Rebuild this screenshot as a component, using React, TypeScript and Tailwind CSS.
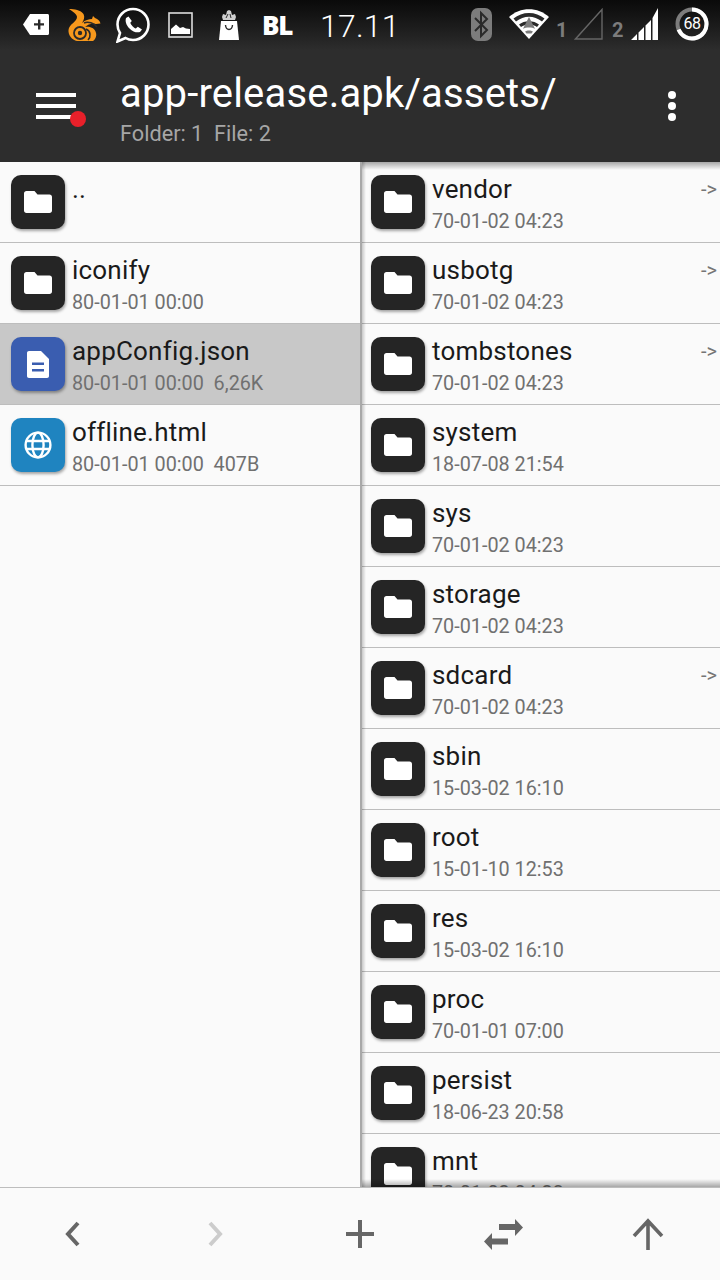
const Folder = () => (
  <svg width="28" height="22" viewBox="0 0 28 22">
    <path d="M2.5 0H10.5L13.5 3.500H25.5C27 3.500 28 4.500 28 6V19.500C28 21 27 22 25.5 22H2.500C1 22 0 21 0 19.500V2.500C0 1 1 0 2.500 0Z" fill="#fff" />
  </svg>
);
const Doc = () => (
  <svg width="22" height="27" viewBox="0 0 22 27">
    <path d="M2 0H14L22 8V25C22 26.200 21.200 27 20 27H2C.8 27 0 26.200 0 25V2C0 .8.800 0 2 0Z" fill="#fff" />
    <path d="M5 11.500H17V14H5ZM5 18H17V20.500H5Z" fill="#3a5db0" />
  </svg>
);
const Globe = () => (
  <svg width="28" height="28" viewBox="0 0 28 28" fill="none" stroke="#fff" strokeWidth="2.4">
    <circle cx="14" cy="14" r="12.4" />
    <ellipse cx="14" cy="14" rx="5.6" ry="12.4" />
    <path d="M2 10H26M2 18H26" />
  </svg>
);

type Row = { name: string; sub: string; kind?: "doc" | "web"; link?: boolean; sel?: boolean };

const left: Row[] = [
  { name: "..", sub: "" },
  { name: "iconify", sub: "80-01-01 00:00" },
  { name: "appConfig.json", sub: "80-01-01 00:00  6,26K", kind: "doc", sel: true },
  { name: "offline.html", sub: "80-01-01 00:00  407B", kind: "web" },
];
const right: Row[] = [
  { name: "vendor", sub: "70-01-02 04:23", link: true },
  { name: "usbotg", sub: "70-01-02 04:23", link: true },
  { name: "tombstones", sub: "70-01-02 04:23", link: true },
  { name: "system", sub: "18-07-08 21:54" },
  { name: "sys", sub: "70-01-02 04:23" },
  { name: "storage", sub: "70-01-02 04:23" },
  { name: "sdcard", sub: "70-01-02 04:23", link: true },
  { name: "sbin", sub: "15-03-02 16:10" },
  { name: "root", sub: "15-01-10 12:53" },
  { name: "res", sub: "15-03-02 16:10" },
  { name: "proc", sub: "70-01-01 07:00" },
  { name: "persist", sub: "18-06-23 20:58" },
  { name: "mnt", sub: "70-01-02 04:23" },
];

function FileRow({ r }: { r: Row }) {
  return (
    <div className={`relative flex h-[81px] shrink-0 items-start border-b border-[#bdbdbd] pl-[11px] pt-[13px] ${r.sel ? "bg-[#c8c8c8]" : ""}`}>
      <div
        className={`flex h-[54px] w-[54px] shrink-0 items-center justify-center rounded-[10px] shadow-[1px_2px_3px_rgba(0,0,0,0.35)] ${
          r.kind === "doc" ? "bg-[#3a5db0]" : r.kind === "web" ? "bg-[#1f84c0]" : "bg-[#252525]"
        }`}
      >
        {r.kind === "doc" ? <Doc /> : r.kind === "web" ? <Globe /> : <Folder />}
      </div>
      <div className="ml-[7px] flex flex-col">
        <div className="mt-[-1px] h-[31px] text-[26px] leading-[31px] tracking-[0.2px] text-[#1a1a1a]">{r.name}</div>
        <div className="mt-[1px] whitespace-pre text-[19.800px] leading-[31px] text-[#707070]">{r.sub}</div>
      </div>
      {r.link && <div className="absolute right-[3px] top-[16px] text-[20px] leading-[22px] text-[#757575]">-&gt;</div>}
    </div>
  );
}

function StatusBar() {
  return (
    <div className="relative flex h-[50px] items-start bg-gradient-to-b from-[#0a0a0a] to-[#2d2d2d]">
      <svg className="ml-[23px] mt-[14px]" width="26" height="21" viewBox="0 0 26 21">
        <path d="M7 0H24.500C25.400 0 26 .6 26 1.500V19.500C26 20.400 25.400 21 24.500 21H7L0 10.500Z" fill="#fff" />
        <path d="M11 9.200H15V5.500H17.400V9.200H21V11.600H17.400V15.500H15V11.600H11Z" fill="#2a2a2a" />
      </svg>
      <svg className="ml-[19px] mt-[9px]" width="33" height="32" viewBox="0 0 33 32" fill="#f7981c">
        <path d="M1 0C6 0 13 1 15.500 5C17 8 16 11 14 14C17 11 21 10 24 10L25 7L27 9C30 10 32 12 32.500 14.500L28 15C24 14 20 15 17 18C22 17 27 19 28 24C29 27 27 31 25 32H9C4 31 0 26 .5 21C1 15 9 13 9 8C9 5 5 3 1 0Z" />
        <circle cx="12" cy="24" r="6" fill="none" stroke="#2a2a2a" strokeWidth="1.8" />
        <circle cx="12" cy="24" r="2.200" fill="#2a2a2a" />
        <path d="M20 31C23 28 23 22 18 20M16 14C20 12 26 14 29 18" fill="none" stroke="#2a2a2a" strokeWidth="1.6" />
      </svg>
      <svg className="ml-[15px] mt-[7px]" width="34" height="36" viewBox="0 0 34 36" fill="none">
        <path d="M1.500 34.500L4 26C2.400 23.500 1.500 20.600 1.500 17.500C1.500 8.900 8.400 2 17 2S32.500 8.900 32.500 17.500 25.600 33 17 33C14.200 33 11.700 32.300 9.500 31Z" stroke="#fff" strokeWidth="2.6" />
        <path d="M12.500 9.500L10 11C9 14 10 18 13.500 21.500S21 26 24 25L26 22.500L21.800 19.800L19.800 21.500C18 21 14.800 17.800 14.300 15.800L15.800 14Z" fill="#fff" />
      </svg>
      <svg className="ml-[18px] mt-[12px]" width="25" height="26" viewBox="0 0 25 26" fill="none">
        <rect x="1" y="1" width="23" height="24" stroke="#ddd" strokeWidth="1.6" />
        <path d="M3 22V17L8 12.500L12 16L15 15L18 16.500L22 17V22Z" fill="#fff" />
      </svg>
      <svg className="ml-[26px] mt-[10px]" width="20" height="30" viewBox="0 0 20 30" fill="#fff">
        <path d="M2 11H18L20 30H0Z" />
        <path d="M3 7L4 4L7 5L8 1L10 0L12 1L13 5L16 4L17 7L16 10H4Z" fill="#d0d0d0" />
        <path d="M7 8L9 4M12 8L11 4" stroke="#2a2a2a" strokeWidth="1" />
        <path d="M6.500 15C7 21 13 21 13.500 15" fill="none" stroke="#2a2a2a" strokeWidth="1.4" />
      </svg>
      <div className="ml-[23px] mt-[12px] w-[30px] font-['Open_Sans'] text-[26px] font-extrabold leading-[27px] tracking-[-1.200px] text-white">BL</div>
      <div className="ml-[28px] mt-[7px] w-[80px] font-['Roboto'] text-[32px] font-light leading-[38px] tracking-[0.2px] text-white">17.11</div>
      <svg className="ml-[71px] mt-[8px]" width="21" height="33" viewBox="0 0 21 33" fill="none">
        <rect width="21" height="33" rx="7" fill="#7c7c7c" />
        <path d="M4 10L16 22L10 28V5L16 11L4 23" stroke="#2a2a2a" strokeWidth="2" />
      </svg>
      <svg className="ml-[17px] mt-[9px]" width="40" height="30" viewBox="0 0 40 30">
        <path d="M0 8C11 -2.500 29 -2.500 40 8L20 30Z" fill="#fff" />
        <path d="M4.500 9.500C13 2 27 2 35.500 9.500L33 12.500C25 6 15 6 7 12.500Z" fill="#2a2a2a" />
        <path d="M10 15.500C15 11 25 11 30 15.500L28 18C24 15 16 15 12 18Z" fill="#2a2a2a" />
        <path d="M14 19.800L20 8L26 19.800C23 18 17 18 14 19.800Z" fill="#7c7c7c" />
        <path d="M16 22.500C18 21 22 21 24 22.500L22.500 24.500H17.500Z" fill="#7c7c7c" />
      </svg>
      <div className="ml-[7px] mt-[19px] w-[8px] text-[20px] font-bold leading-[22px] text-[#7c7c7c]">1</div>
      <svg className="ml-[10px] mt-[8px]" width="29" height="32" viewBox="0 0 29 32" fill="none">
        <path d="M1.500 31H28V1.500Z" stroke="#666" strokeWidth="1.4" />
      </svg>
      <div className="ml-[9px] mt-[19px] w-[10px] text-[20px] font-bold leading-[22px] text-[#7c7c7c]">2</div>
      <svg className="ml-[9px] mt-[8px]" width="27" height="32" viewBox="0 0 27 32" fill="#fff">
        <path d="M0 32L6 26V32ZM7.500 24.500L13 19V32H7.500ZM14.500 17.500L20 12V32H14.500ZM21.500 10L27 0V32H21.500Z" />
      </svg>
      <div className="relative ml-[17px] mt-[7px] h-[34px] w-[34px]">
        <svg width="34" height="34" viewBox="0 0 34 34" fill="none" className="absolute left-0 top-0">
          <circle cx="17" cy="17" r="14.500" stroke="#7c7c7c" strokeWidth="4" />
          <path d="M17 2.500A14.500 14.500 0 1 1 3.600 22.500" stroke="#fff" strokeWidth="4" />
        </svg>
        <div className="absolute inset-0 flex items-center justify-center font-['Roboto'] text-[16px] leading-[34px] tracking-[-0.5px] text-white">68</div>
      </div>
    </div>
  );
}

function Header() {
  return (
    <div className="relative flex h-[112px] items-start bg-[#2d2d2d]">
      <div className="relative ml-[36px] mt-[43px] flex h-[26px] w-[40px] flex-col justify-between">
        <div className="h-[4px] bg-white" />
        <div className="h-[4px] bg-white" />
        <div className="h-[4px] bg-white" />
        <div className="absolute left-[34px] top-[18px] h-[16px] w-[16px] rounded-full bg-[#e8202a]" />
      </div>
      <div className="ml-[44px] flex flex-col">
        <div className="mt-[20px] h-[48px] text-[40px] leading-[48px] tracking-[0.180px] text-white">app-release.apk/assets/</div>
        <div className="mt-[2px] text-[21.700px] leading-[28px] text-[#a6a6a6]">Folder: 1&nbsp; File: 2</div>
      </div>
      <div className="absolute left-[668px] top-[41px] flex flex-col gap-[3px]">
        <div className="h-[8px] w-[8px] rounded-full bg-white" />
        <div className="h-[8px] w-[8px] rounded-full bg-white" />
        <div className="h-[8px] w-[8px] rounded-full bg-white" />
      </div>
    </div>
  );
}

export default function App() {
  return (
    <div className="flex h-[1280px] w-[720px] flex-col overflow-hidden bg-[#fafafa] font-['Roboto','sans-serif']">
      <StatusBar />
      <Header />
      <div className="flex min-h-0 flex-1">
        <div className="flex w-[360px] shrink-0 flex-col">
          {left.map((r) => (
            <FileRow key={r.name} r={r} />
          ))}
        </div>
        <div className="relative flex min-w-0 flex-1 flex-col overflow-hidden">
          {right.map((r) => (
            <FileRow key={r.name} r={r} />
          ))}
          <div className="absolute inset-x-0 top-0 h-[8px] bg-gradient-to-b from-[#00000055] to-transparent" />
          <div className="absolute inset-x-0 bottom-0 h-[8px] bg-gradient-to-t from-[#00000055] to-transparent" />
          <div className="absolute inset-y-0 left-0 w-[2px] bg-[#a8a8a8]" />
          <div className="absolute inset-y-0 left-[2px] w-[4px] bg-gradient-to-r from-[#00000033] to-transparent" />
        </div>
      </div>
      <div className="grid h-[93px] shrink-0 grid-cols-5 items-center border-t border-[#bdbdbd] bg-[#fafafa]">
        <div className="flex justify-center">
          <svg width="16" height="26" viewBox="0 0 16 26" fill="none" stroke="#666" strokeWidth="4"><path d="M14 2L4 13L14 24" /></svg>
        </div>
        <div className="flex justify-center">
          <svg width="16" height="26" viewBox="0 0 16 26" fill="none" stroke="#ccc" strokeWidth="4"><path d="M2 2L12 13L2 24" /></svg>
        </div>
        <div className="flex justify-center">
          <svg width="28" height="28" viewBox="0 0 28 28" fill="#666"><path d="M12 0H16V12H28V16H16V28H12V16H0V12H12Z" /></svg>
        </div>
        <div className="flex justify-center">
          <svg width="40" height="32" viewBox="0 0 40 32" fill="#666"><path d="M15 6H31V1L39 9.500L31 18V12H15ZM24 20.500H8V15L0 23.500L8 32V26.500H24Z" /></svg>
        </div>
        <div className="flex justify-center">
          <svg width="32" height="32" viewBox="0 0 32 32" fill="none" stroke="#666" strokeWidth="3.600"><path d="M16 32V3M2 18L16 3L30 18" /></svg>
        </div>
      </div>
    </div>
  );
}
